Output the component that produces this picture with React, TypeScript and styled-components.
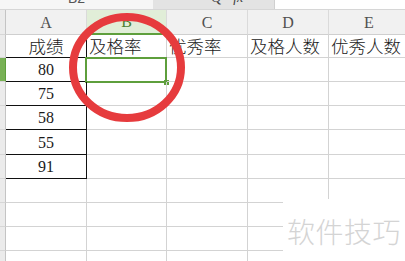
import React from 'react';
import styled, { createGlobalStyle } from 'styled-components';

const GlobalStyle = createGlobalStyle`
  html, body {
    margin: 0;
    padding: 0;
    background: #ffffff;
    overflow: hidden;
  }
`;

const COLUMNS = [
  { key: 'A', width: 81 },
  { key: 'B', width: 80 },
  { key: 'C', width: 81 },
  { key: 'D', width: 81 },
  { key: 'E', width: 81 },
];

const ROW_HEIGHTS = [23, 24, 24, 24, 25, 24, 24, 24, 24, 24, 24];
const TITLES = ['成绩', '及格率', '优秀率', '及格人数', '优秀人数'];
const SCORES = ['80', '75', '58', '55', '91'];

const GRID = '#d3d3d3';
const GREEN = '#5e9f3c';
const CJK = '"Noto Sans CJK SC", "Liberation Serif", serif';
const LATIN = '"Liberation Serif", "DejaVu Serif", serif';

const Screen = styled.div`
  position: relative;
  width: 405px;
  height: 261px;
  overflow: hidden;
  background: #fff;
  font-family: ${CJK};
`;

const TopBar = styled.div`
  display: flex;
  height: 9px;
  border-bottom: 1px solid #d6d6d6;
  overflow: hidden;
`;

const NameBox = styled.div`
  flex: 0 0 153px;
  display: flex;
  justify-content: center;
  background: #f6f6f6;
  color: #555;
  font: 14px/14px "Liberation Sans", sans-serif;
`;

const ToolZone = styled.div`
  flex: 0 0 121px;
  display: flex;
  gap: 12px;
  padding-left: 58px;
  box-sizing: border-box;
  background: #e3e3e3;
  color: #444;
  font: 14px/14px "Liberation Serif", serif;
`;

// the bar is scrolled half out of the shot, only the feet of its glyphs show
const Clipped = styled.span<{ $italic?: boolean }>`
  margin-top: -9px;
  font-style: ${(p) => (p.$italic ? 'italic' : 'normal')};
`;

const FormulaInput = styled.div`
  flex: 1;
  background: #fff;
  border-left: 1px solid #d0d0d0;
`;

const Row = styled.div<{ $height: number }>`
  display: flex;
  height: ${(p) => p.$height}px;
`;

const RowHead = styled.div<{ $active?: boolean }>`
  flex: 0 0 6px;
  box-sizing: border-box;
  background: ${(p) => (p.$active ? '#78b155' : '#ebebeb')};
  border-right: 1px solid ${(p) => (p.$active ? GREEN : '#c4c4c4')};
  border-bottom: 1px solid #d6d6d6;
`;

const ColHead = styled.div<{ $width: number; $active?: boolean }>`
  flex: 0 0 ${(p) => p.$width}px;
  box-sizing: border-box;
  display: flex;
  align-items: center;
  justify-content: center;
  background: ${(p) => (p.$active ? '#e1eed8' : '#f1f1f1')};
  border-right: 1px solid #dadada;
  border-bottom: ${(p) => (p.$active ? `2px solid ${GREEN}` : '1px solid #cfcfcf')};
  color: ${(p) => (p.$active ? '#4d7f31' : '#505050')};
  font: 16px/1 ${LATIN};
  padding-top: 1px;
`;

const Cell = styled.div<{ $width: number; $boxed?: boolean; $center?: boolean }>`
  position: relative;
  flex: 0 0 ${(p) => p.$width}px;
  box-sizing: border-box;
  display: flex;
  align-items: center;
  justify-content: ${(p) => (p.$center ? 'center' : 'flex-start')};
  padding: 0 2px;
  border-right: 1px solid ${(p) => (p.$boxed ? '#111' : GRID)};
  border-bottom: 1px solid ${(p) => (p.$boxed ? '#111' : GRID)};
  white-space: nowrap;
  color: #1a1a1a;
  font-size: 17.5px;
  font-weight: 300;
  line-height: 1;
`;

const Number = styled.span`
  font: 16px/1 ${LATIN};
  padding-top: 1px;
`;

const Selection = styled.div`
  position: absolute;
  left: -2px;
  top: -1px;
  right: -1px;
  bottom: -2px;
  border: 2px solid ${GREEN};
  pointer-events: none;
`;

const Handle = styled.div`
  position: absolute;
  right: -4px;
  bottom: -4px;
  width: 5px;
  height: 5px;
  background: ${GREEN};
`;

const Mark = styled.svg`
  position: absolute;
  left: 0;
  top: 0;
  pointer-events: none;
`;

const Watermark = styled.div`
  position: absolute;
  left: 283px;
  top: 199px;
  right: 0;
  bottom: 0;
  background: #fff;
  padding: 18px 0 0 4px;
  color: #d4d4d4;
  font: 300 28px/1 ${CJK};
  letter-spacing: 0.5px;
`;

const cellText = (row: number, col: number) => {
  if (row === 0) return TITLES[col];
  if (col === 0 && row <= SCORES.length) return <Number>{SCORES[row - 1]}</Number>;
  return null;
};

const App: React.FC = () => {
  return (
    <Screen>
      <GlobalStyle />
      <TopBar>
        <NameBox>
          <Clipped>B2</Clipped>
        </NameBox>
        <ToolZone>
          <Clipped>Q</Clipped>
          <Clipped $italic>fx</Clipped>
        </ToolZone>
        <FormulaInput />
      </TopBar>

      {/* column letters */}
      <Row $height={25}>
        <RowHead />
        {COLUMNS.map((c) => (
          <ColHead key={c.key} $width={c.width} $active={c.key === 'B'}>
            {c.key}
          </ColHead>
        ))}
      </Row>

      {ROW_HEIGHTS.map((h, r) => (
        <Row key={r} $height={h}>
          <RowHead $active={r === 1} />
          {COLUMNS.map((c, ci) => (
            <Cell
              key={c.key}
              $width={c.width}
              $boxed={ci === 0 && r <= SCORES.length}
              $center={ci === 0}
            >
              {cellText(r, ci)}
              {r === 1 && ci === 1 && (
                <Selection>
                  <Handle />
                </Selection>
              )}
            </Cell>
          ))}
        </Row>
      ))}

      <Mark width="405" height="261" viewBox="0 0 405 261">
        <ellipse cx="127" cy="67.5" rx="54" ry="50.5" fill="none" stroke="#e63b3d" strokeWidth="8" />
      </Mark>

      <Watermark>软件技巧</Watermark>
    </Screen>
  );
};

export default App;
